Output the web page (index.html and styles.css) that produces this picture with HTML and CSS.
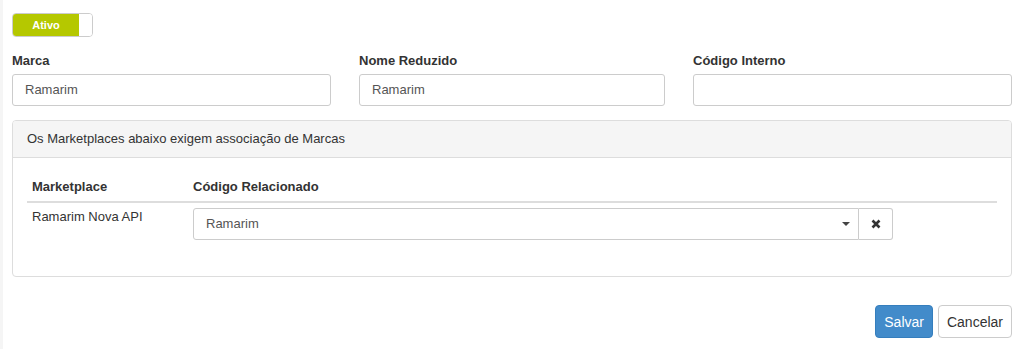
FILE: index.html
```html
<!DOCTYPE html>
<html lang="pt-BR">
<head>
    <meta charset="UTF-8">
    <title>Marca</title>
    <link rel="stylesheet" href="styles.css">
</head>
<body>
    <div class="page">
        <div class="toggle">
            <span class="toggle-on">Ativo</span>
            <span class="toggle-handle"></span>
        </div>

        <div class="form-row">
            <div class="form-group col-a">
                <label>Marca</label>
                <div class="form-control">Ramarim</div>
            </div>
            <div class="form-group col-b">
                <label>Nome Reduzido</label>
                <div class="form-control">Ramarim</div>
            </div>
            <div class="form-group col-c">
                <label>Código Interno</label>
                <div class="form-control"></div>
            </div>
        </div>

        <div class="panel">
            <div class="panel-heading">Os Marketplaces abaixo exigem associação de Marcas</div>
            <div class="panel-body">
                <div class="tbl-head">
                    <div class="cell c1">Marketplace</div>
                    <div class="cell c2">Código Relacionado</div>
                </div>
                <div class="tbl-row">
                    <div class="cell c1">Ramarim Nova API</div>
                    <div class="cell c2">
                        <div class="select">
                            <span>Ramarim</span>
                            <span class="caret"></span>
                        </div>
                        <div class="btn-clear">
                            <svg width="10" height="10" viewBox="0 0 10 10">
                                <path d="M1.5 1.5 L8.5 8.5 M8.5 1.5 L1.5 8.5" stroke="#333" stroke-width="2.6" stroke-linecap="butt"/>
                            </svg>
                        </div>
                    </div>
                </div>
            </div>
        </div>

        <div class="actions">
            <button class="btn btn-primary">Salvar</button>
            <button class="btn btn-default">Cancelar</button>
        </div>
    </div>
</body>
</html>
```

FILE: styles.css
```css
body, html {
    margin: 0;
    padding: 0;
    background: #fff;
    font-family: 'Liberation Sans', Arial, sans-serif;
    font-size: 13px;
    color: #333;
}

.page {
    height: 349px;
    box-sizing: border-box;
    padding: 13px 12px 0 9px;
    border-left: 3px solid #f5f5f5;
}

/* Schalter "Ativo" */
.toggle {
    display: flex;
    width: 81px;
    height: 24px;
    box-sizing: border-box;
    border: 1px solid #ccc;
    border-radius: 4px;
    overflow: hidden;
}

.toggle-on {
    width: 66px;
    background: #b5c800;
    color: #fff;
    font-size: 11px;
    font-weight: bold;
    display: flex;
    align-items: center;
    justify-content: center;
}

.toggle-handle {
    flex: 1;
    background: #fff;
}

/* Formularfelder */
.form-row {
    display: flex;
    margin-top: 16px;
}

.form-group label {
    display: block;
    font-weight: bold;
    font-size: 13px;
    height: 21px;
    line-height: 15px;
}

.col-a { width: 319px; }
.col-b { width: 306px; margin-left: 28px; }
.col-c { width: 319px; margin-left: 28px; }

.form-control {
    height: 32px;
    box-sizing: border-box;
    border: 1px solid #ccc;
    border-radius: 3px;
    padding: 0 12px;
    line-height: 30px;
    color: #555;
}

/* Panel */
.panel {
    margin-top: 14px;
    border: 1px solid #ddd;
    border-radius: 4px;
    height: 157px;
    box-sizing: border-box;
}

.panel-heading {
    background: #f5f5f5;
    border-bottom: 1px solid #ddd;
    height: 37px;
    box-sizing: border-box;
    line-height: 36px;
    padding-left: 14px;
    border-radius: 3px 3px 0 0;
}

.panel-body {
    padding: 15px 14px;
}

.tbl-head {
    display: flex;
    border-bottom: 2px solid #ddd;
    height: 28px;
    font-weight: bold;
    line-height: 28px;
}

.tbl-row {
    display: flex;
    padding-top: 5px;
}

.cell {
    padding-left: 5px;
}

.c1 { width: 156px; }

.tbl-row .c1 {
    line-height: 16px;
    padding-top: 1px;
}

.tbl-row .c2 {
    display: flex;
}

.select {
    width: 666px;
    height: 32px;
    box-sizing: border-box;
    border: 1px solid #ccc;
    border-radius: 3px 0 0 3px;
    padding: 0 12px;
    color: #555;
    line-height: 30px;
    display: flex;
    justify-content: space-between;
    align-items: center;
}

.caret {
    width: 0;
    height: 0;
    border-left: 4px solid transparent;
    border-right: 4px solid transparent;
    border-top: 4px solid #444;
    margin-right: -4px;
}

.btn-clear {
    width: 34px;
    height: 32px;
    box-sizing: border-box;
    border: 1px solid #ccc;
    border-left: none;
    border-radius: 0 3px 3px 0;
    display: flex;
    align-items: center;
    justify-content: center;
}

/* Buttons */
.actions {
    display: flex;
    justify-content: flex-end;
    gap: 5px;
    margin-top: 28px;
}

.btn {
    font-family: inherit;
    font-size: 14px;
    height: 33px;
    border-radius: 4px;
    padding: 0 8px;
    cursor: pointer;
}

.btn-primary {
    background: #428bca;
    border: 1px solid #357ebd;
    color: #fff;
}

.btn-default {
    background: #fff;
    border: 1px solid #ccc;
    color: #333;
}
```
